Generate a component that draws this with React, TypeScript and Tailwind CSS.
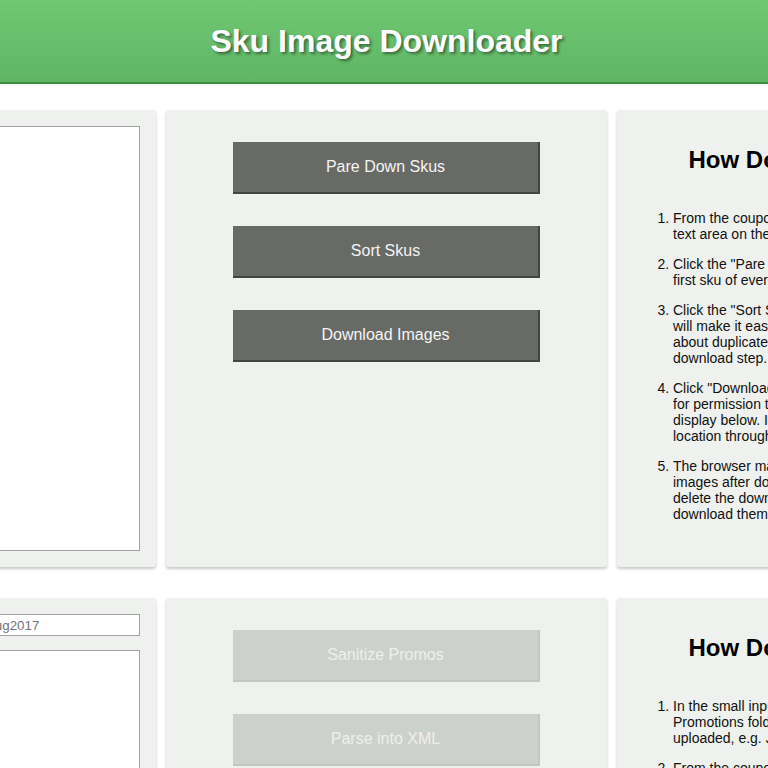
import React from "react";

const panel =
  "w-[441px] shrink-0 rounded-[3px] bg-[#eef1ed] p-4 shadow-[0_2px_3px_rgba(0,0,0,0.22)]";

const actionBtn =
  "h-[52px] w-[307px] border-r-2 border-b-2 border-[#434541] bg-[#686a65] text-[16px] text-[#f4f4f4]";

const disabledBtn =
  "h-[52px] w-[307px] border-r-2 border-b-2 border-[#c3c7c2] bg-[#cdd1cc] text-[16px] text-[#eef0ec]";

const HowTo = ({ steps }: { steps: string[][] }) => (
  <div>
    <h2 className="mt-5 pr-[2px] text-center text-[24px] font-bold leading-[28px] text-black">
      How Do I Use This Thing?
    </h2>
    <ol className="mt-9 list-decimal pl-10 text-[14px] leading-4 text-[#111]">
      {steps.map((lines, i) => (
        <li key={i} className="mb-[14px]">
          {lines.map((line, j) => (
            <React.Fragment key={j}>
              {line}
              {j < lines.length - 1 && <br />}
            </React.Fragment>
          ))}
        </li>
      ))}
    </ol>
  </div>
);

const skuSteps = [
  ["From the coupon sheet, paste all skus into the", "text area on the left."],
  ['Click the "Pare Down Skus" button to keep the', "first sku of every item."],
  [
    'Click the "Sort Skus" button (optional). It',
    "will make it easier to spot and think",
    "about duplicate skus before the",
    "download step.",
  ],
  [
    'Click "Download Images". Your browser may ask',
    "for permission to save many files. Images will",
    "display below. If needed, change the",
    "location through your browser settings.",
  ],
  [
    "The browser may not show all of the",
    "images after downloading. If so, simply",
    "delete the downloaded files and",
    "download them again.",
  ],
];

const promoSteps = [
  [
    "In the small input box, type the name of the",
    "Promotions folder the images will be",
    "uploaded, e.g. July2017.",
  ],
  ["From the coupon sheet, paste the promos into", "the large text area."],
];

const App = () => {
  return (
    <div className="h-screen overflow-hidden bg-white font-['Liberation_Sans',Arial,sans-serif]">
      <header className="flex h-[84px] items-center justify-center border-b-2 border-[#3e8c3f] bg-linear-to-b from-[#6fc874] to-[#5fb564]">
        <h1 className="pl-[5px] text-[32px] font-bold text-white [text-shadow:2px_2px_3px_rgba(0,0,0,0.45)]">
          Sku Image Downloader
        </h1>
      </header>

      <div className="-ml-[285px] mt-[26px] flex w-[1343px] gap-[10px]">
        <section className={panel}>
          <textarea className="block h-[425px] w-full resize-none border border-[#a2a2a2] bg-white" />
        </section>
        <section className={panel}>
          <div className="mt-4 flex flex-col items-center gap-8">
            <button className={actionBtn}>Pare Down Skus</button>
            <button className={actionBtn}>Sort Skus</button>
            <button className={actionBtn}>Download Images</button>
          </div>
        </section>
        <section className={panel}>
          <HowTo steps={skuSteps} />
        </section>
      </div>

      <div className="-ml-[285px] mt-[31px] flex w-[1343px] gap-[10px]">
        <section className={panel}>
          <input
            className="block h-[22px] w-full border border-[#a2a2a2] bg-white px-2 text-[13.33px] placeholder:text-[#757575]"
            placeholder="Enter name of the Promotions folder, e.g. Aug2017"
          />
          <textarea className="mt-[14px] block h-[425px] w-full resize-none border border-[#a2a2a2] bg-white" />
        </section>
        <section className={panel}>
          <div className="mt-4 flex flex-col items-center gap-8">
            <button className={disabledBtn} disabled>
              Sanitize Promos
            </button>
            <button className={disabledBtn} disabled>
              Parse into XML
            </button>
          </div>
        </section>
        <section className={panel}>
          <HowTo steps={promoSteps} />
        </section>
      </div>
    </div>
  );
};

export default App;
